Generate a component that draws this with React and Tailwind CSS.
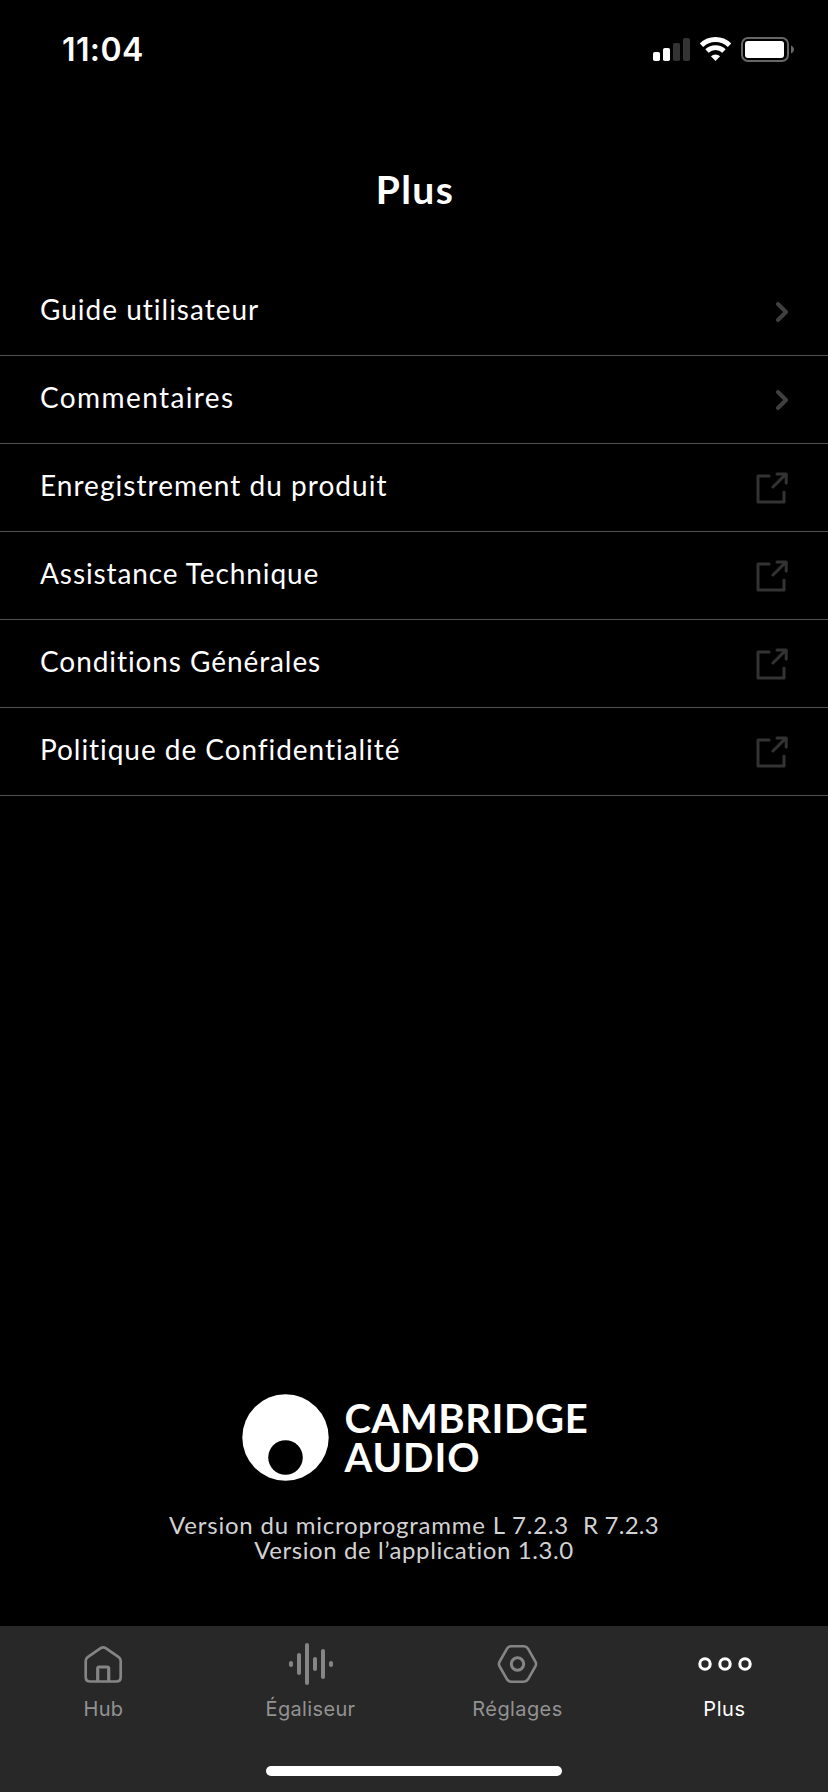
import React from 'react';

const menuItems = [
  { label: 'Guide utilisateur', spacing: 'tracking-[1px]' },
  { label: 'Commentaires', spacing: 'tracking-[1.4px]' },
  { label: 'Enregistrement du produit', spacing: 'tracking-[1.03px]', external: true },
  { label: 'Assistance Technique', spacing: 'tracking-[0.9px]', external: true },
  { label: 'Conditions Générales', spacing: 'tracking-[0.92px]', external: true },
  { label: 'Politique de Confidentialité', spacing: 'tracking-[0.95px]', external: true },
];

const StatusBar = () => (
  <div className="flex justify-between h-[100px] pl-[62px] pr-[34px] pt-[34px]">
    <span className="font-['Inter',sans-serif] font-semibold text-[32px] leading-[32px] tracking-[0.4px]">11:04</span>
    <svg className="w-[144px] h-[28px] mt-[1px] shrink-0" viewBox="0 0 144 28" fill="none">
      {/* Signal */}
      <rect x="3" y="17" width="7" height="9" rx="1.8" fill="#fff" />
      <rect x="13" y="13" width="7" height="13" rx="1.8" fill="#fff" />
      <rect x="23" y="8" width="7" height="18" rx="1.8" fill="#333" />
      <rect x="33" y="3" width="7" height="23" rx="1.8" fill="#333" />
      {/* Wifi */}
      <path d="M51.5 10.2a20 20 0 0 1 28 0" stroke="#fff" strokeWidth="4.9" />
      <path d="M57 16.1a12.2 12.2 0 0 1 17 0" stroke="#fff" strokeWidth="4.9" />
      <path d="M65.5 26l-4.600-4.700a6.600 6.600 0 0 1 9.200 0z" fill="#fff" />
      {/* Battery */}
      <rect x="92" y="3" width="46" height="23" rx="6" stroke="#666" strokeWidth="2" />
      <rect x="95" y="6" width="39" height="17" rx="3" fill="#fff" />
      <path d="M141 10.500c4 1.500 4 6.500 0 8z" fill="#666" />
    </svg>
  </div>
);

const ChevronIcon = () => (
  <svg className="w-[12px] h-[20px] mr-[8px]" viewBox="0 0 12 20" fill="none" stroke="#404040" strokeWidth="4" strokeLinecap="round" strokeLinejoin="round">
    <path d="M2 2l8 8-8 8" />
  </svg>
);

const ExternalIcon = () => (
  <svg className="w-[32px] h-[32px] mr-[8px]" viewBox="0 0 32 32" fill="none" stroke="#333" strokeWidth="3" strokeLinecap="round" strokeLinejoin="round">
    <path d="M13 4H2v26h26V20" />
    <path d="M17 15L30 2M21 2h9.200V11" />
  </svg>
);

const MenuRow = ({ item }) => (
  <li className="flex items-center justify-between h-[88px] pl-10 pr-[32px] border-b border-[#505050]">
    <span className={`text-[28px] leading-[34px] pb-[5px] whitespace-nowrap ${item.spacing}`}>{item.label}</span>
    {item.external ? <ExternalIcon /> : <ChevronIcon />}
  </li>
);

const Brand = () => (
  <div className="flex items-start w-[345px]">
    <svg className="w-[87px] h-[87px] shrink-0" viewBox="0 0 87 87">
      <circle cx="43.5" cy="43.5" r="43.2" fill="#fff" />
      <circle cx="43.5" cy="63.5" r="17.3" fill="#000" />
    </svg>
    <div className="ml-[16px] pt-[5px] font-bold text-[40px] leading-[39px] whitespace-nowrap">
      <p className="tracking-[0.6px]">CAMBRIDGE</p>
      <p className="tracking-[0.9px]">AUDIO</p>
    </div>
  </div>
);

const HubIcon = () => (
  <svg className="w-[56px] h-[44px]" viewBox="0.8 0 56 44" fill="none" stroke="#858585" strokeWidth="2.7" strokeLinejoin="round">
    <path d="M25.5 6.200Q28 4.400 30.500 6.200L43.500 15.200Q45.500 16.600 45.500 19V35Q45.500 39.500 41 39.500H15Q10.500 39.500 10.500 35V19Q10.500 16.600 12.500 15.200Z" />
    <path d="M22.500 39V26.500Q22.500 25 24 25H32Q33.500 25 33.500 26.500V39" strokeWidth="3.200" />
  </svg>
);

const EqualizerIcon = () => (
  <svg className="w-[56px] h-[44px]" viewBox="0 0 56 44" fill="none" stroke="#858585" strokeWidth="4" strokeLinecap="round">
    <path d="M8 21v2M16 13v18M24 3v38M32 17v10M40 9v26M48 21v2" />
  </svg>
);

const SettingsIcon = () => (
  <svg className="w-[56px] h-[44px]" viewBox="0.5 0 56 44" fill="none" stroke="#858585">
    <path d="M21.500 4.300H34.500Q37 4.300 38.500 6.700L45.800 19.500Q47.300 22 45.800 24.500L38.500 37.300Q37 39.700 34.500 39.700H21.500Q19 39.700 17.500 37.300L10.200 24.500Q8.700 22 10.200 19.500L17.500 6.700Q19 4.300 21.500 4.300Z" strokeWidth="2.600" />
    <circle cx="28" cy="22" r="6.200" strokeWidth="3" />
  </svg>
);

const MoreIcon = () => (
  <svg className="w-[56px] h-[44px]" viewBox="0 0 56 44" fill="none" stroke="#fff" strokeWidth="3.1">
    <circle cx="8" cy="22" r="5.2" />
    <circle cx="28" cy="22" r="5.2" />
    <circle cx="48" cy="22" r="5.2" />
  </svg>
);

const tabs = [
  { label: 'Hub', Icon: HubIcon, spacing: 'tracking-[0.3px]' },
  { label: 'Égaliseur', Icon: EqualizerIcon, spacing: 'tracking-[0.35px]' },
  { label: 'Réglages', Icon: SettingsIcon, spacing: 'tracking-[0.4px]' },
  { label: 'Plus', Icon: MoreIcon, spacing: 'tracking-[0.6px]', active: true },
];

const TabBar = () => (
  <nav className="h-[166px] pt-[16px] bg-[#282828] flex flex-col items-center">
    <div className="grid grid-cols-4 w-full">
      {tabs.map(({ label, Icon, spacing, active }) => (
        <button key={label} className="flex flex-col items-center">
          <Icon />
          <span className={`mt-[11px] font-['Inter',sans-serif] text-[20px] leading-[24px] ${spacing} ${active ? 'text-white' : 'text-[#929292]'}`}>
            {label}
          </span>
        </button>
      ))}
    </div>
    {/* Home indicator */}
    <div className="mt-auto mb-[16px] w-[296px] h-[10px] rounded-full bg-white" />
  </nav>
);

export default function App() {
  return (
    <div className="w-[828px] h-[1792px] bg-black text-white font-['Lato',sans-serif] flex flex-col overflow-hidden">
      <StatusBar />
      <h1 className="h-[168px] pt-[69px] pl-[2px] text-center font-bold text-[39px] leading-[40px] tracking-[1.4px]">Plus</h1>
      <ul>
        {menuItems.map((item) => (
          <MenuRow key={item.label} item={item} />
        ))}
      </ul>
      <div className="mt-auto flex flex-col items-center pb-[64px]">
        <Brand />
        <div className="mt-[31px] text-center text-[24px] leading-[25px] text-[#d2d2d2] whitespace-pre">
          <p>
            <span className="tracking-[0.78px]">{'Version du microprogramme L 7.2.3  '}</span>
            <span className="tracking-[0.25px]">R 7.2.3</span>
          </p>
          <p className="tracking-[0.6px]">Version de l’application 1.3.0</p>
        </div>
      </div>
      <TabBar />
    </div>
  );
}
